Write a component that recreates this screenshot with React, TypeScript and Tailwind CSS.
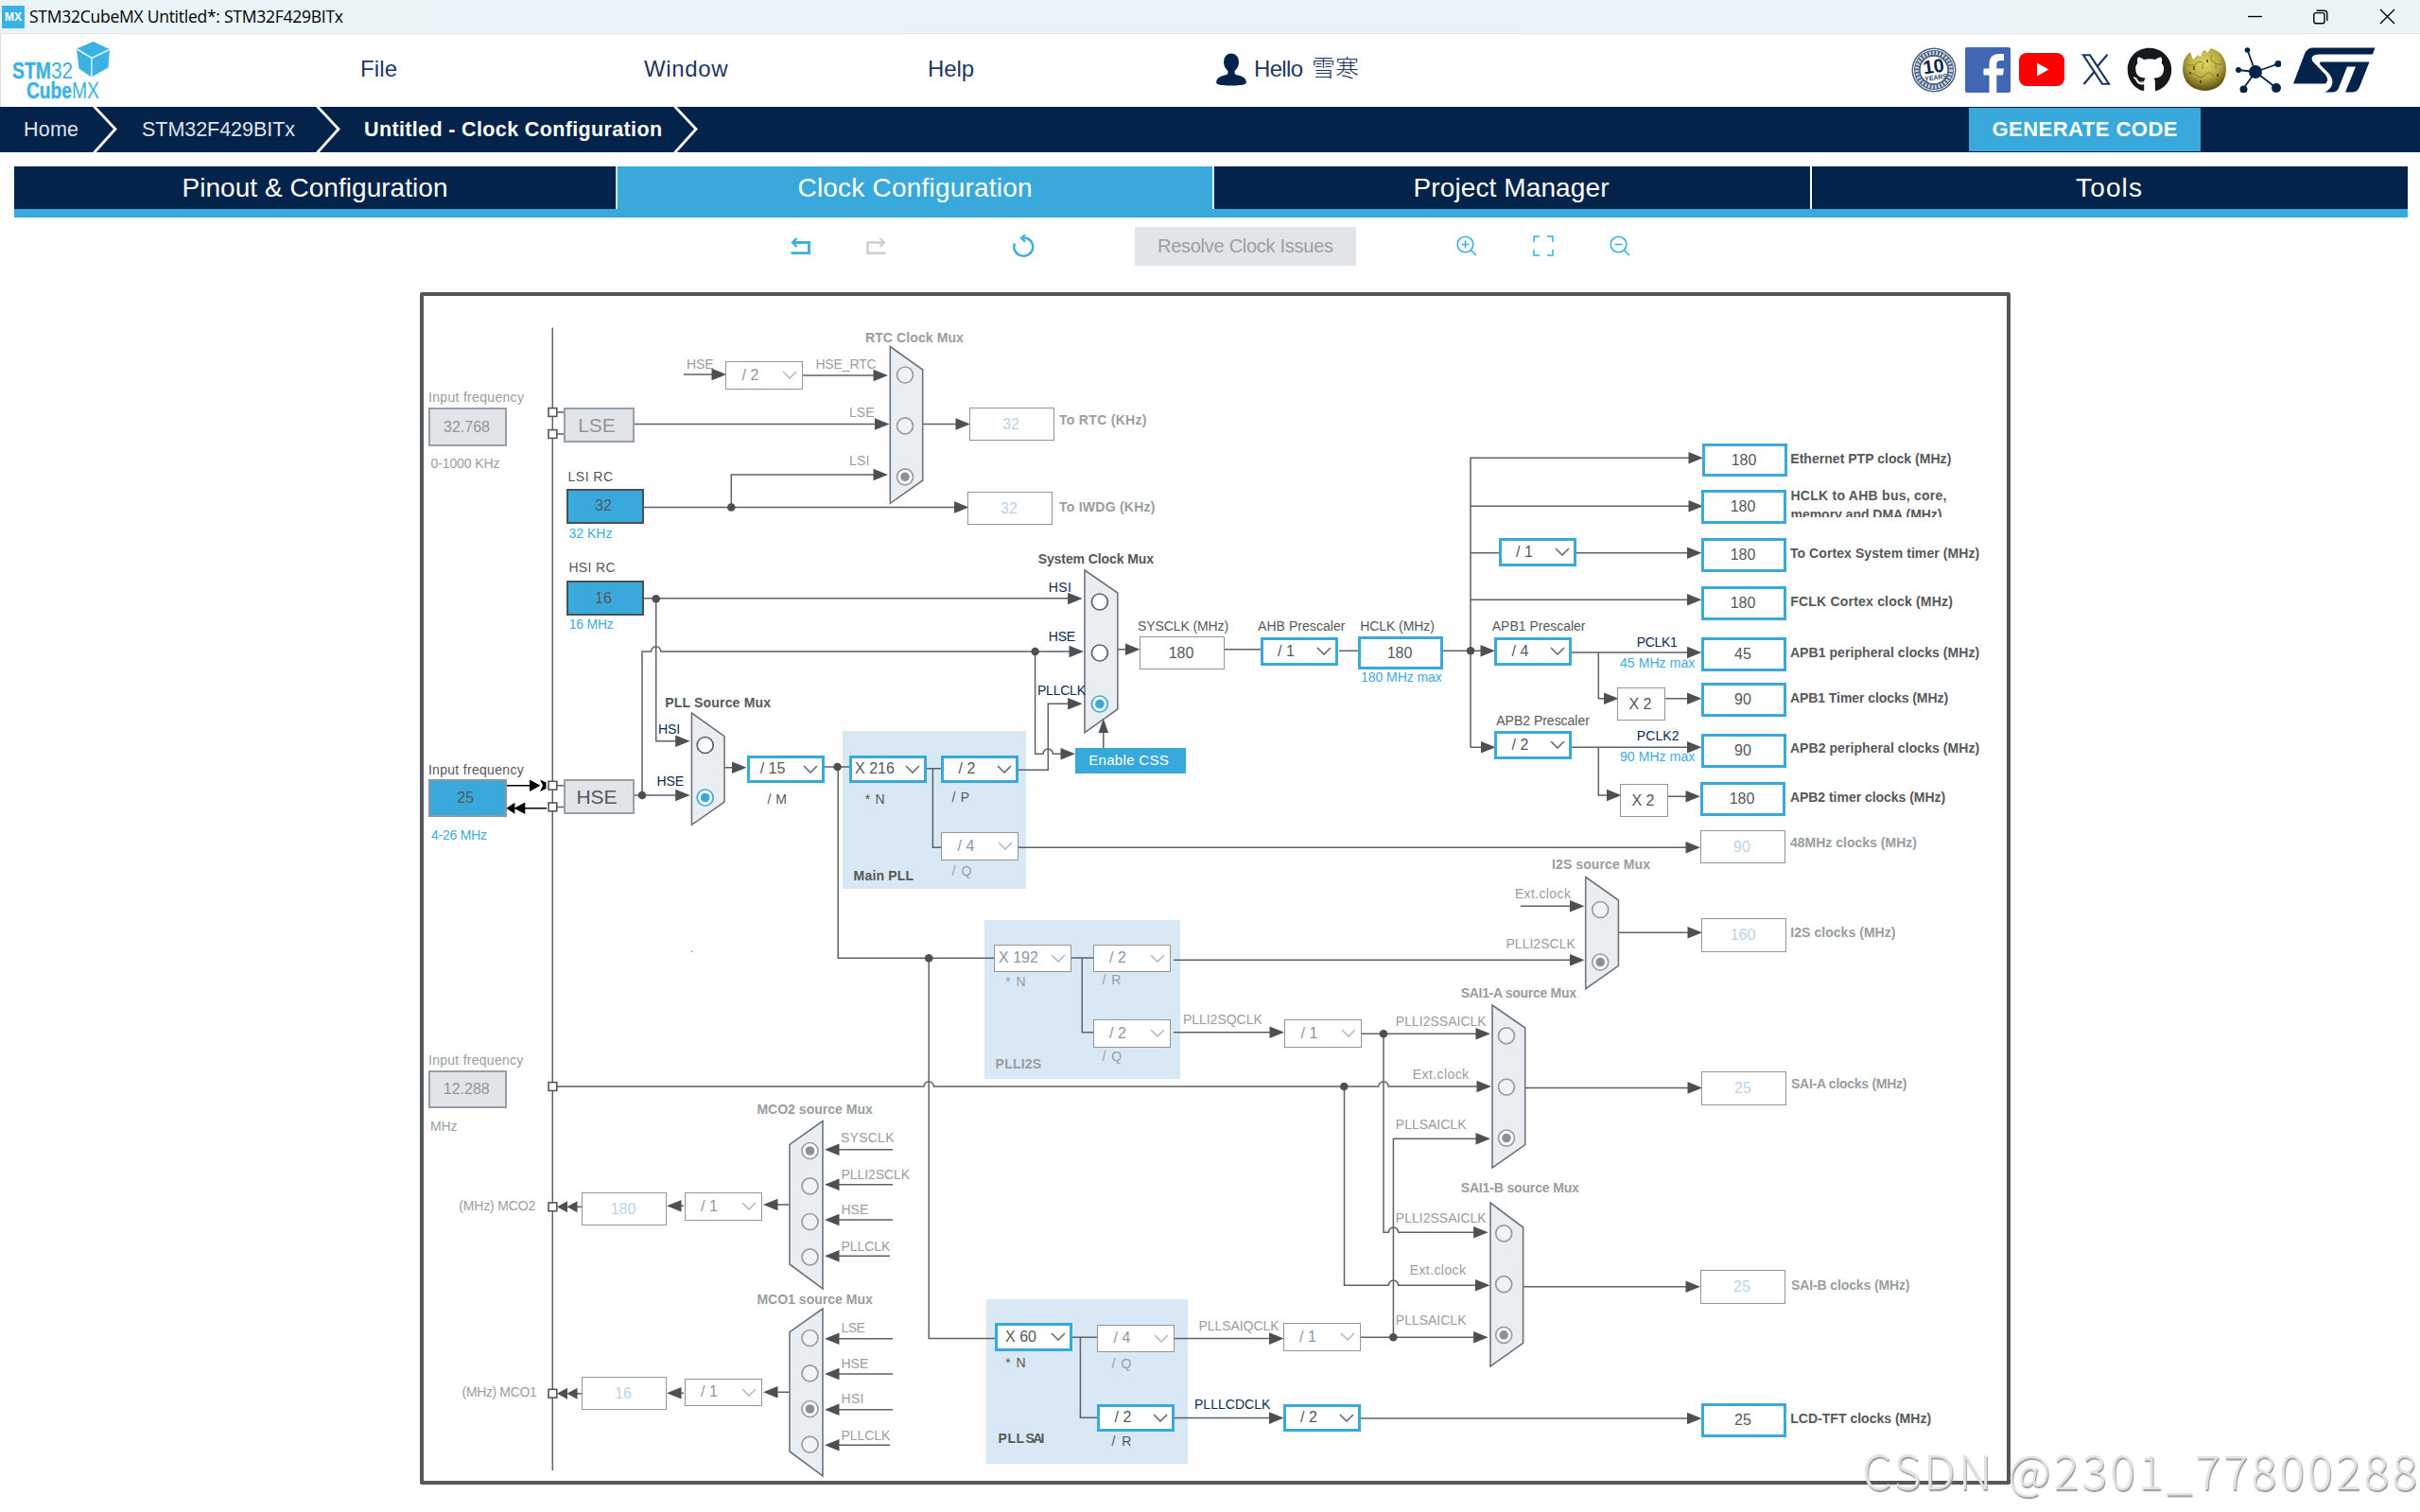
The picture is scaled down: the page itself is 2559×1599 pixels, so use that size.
import React, { useLayoutEffect, useRef } from "react";
import { FaGithub } from "react-icons/fa6";

/* Text run whose tracking is adjusted so that it spans a given width. */
function Fit({ t, w, className = "" }: { t: string; w?: number; className?: string }) {
  const ref = useRef<HTMLSpanElement>(null);
  useLayoutEffect(() => {
    const el = ref.current;
    if (!el || !w) return;
    el.style.letterSpacing = "0px";
    const natural = el.getBoundingClientRect().width;
    const gaps = Math.max(1, Array.from(t).length - 1);
    el.style.letterSpacing = `${(w - natural) / gaps}px`;
    el.style.marginRight = `${-(w - natural) / gaps}px`;
  }, [t, w]);
  return (
    <span ref={ref} className={`inline-block whitespace-pre ${className}`}>
      {t}
    </span>
  );
}

const OX = 444;
const OY = 309;

type Tone = "dark" | "gray" | "navy" | "blue";
const tones: Record<Tone, string> = {
  dark: "text-[#54585a]",
  gray: "text-[#999da1]",
  navy: "text-[#0b2a56]",
  blue: "text-[#3bace0]",
};

/* [text, left, right, baseline, tone, bold] */
type LabelRow = [string, number, number, number, Tone, boolean?];
const labels: LabelRow[] = [
  ["Input frequency", 454, 553.4, 425, "gray"],
  ["0-1000 KHz", 456.5, 528, 495.3, "gray"],
  ["LSI RC", 601.6, 647.5, 509, "dark"],
  ["32 KHz", 602.4, 647, 568.7, "blue"],
  ["HSI RC", 602.4, 650.2, 604.7, "dark"],
  ["16 MHz", 602.8, 648.3, 665, "blue"],
  ["HSE", 727, 754, 390.3, "gray"],
  ["HSE_RTC", 863.4, 926.2, 390.3, "gray"],
  ["RTC Clock Mux", 916, 1018.4, 362, "gray", true],
  ["LSE", 899, 924, 441.3, "gray"],
  ["LSI", 899, 919, 492.3, "gray"],
  ["To RTC (KHz)", 1121, 1212, 449, "gray", true],
  ["To IWDG (KHz)", 1121, 1221, 541, "gray", true],
  ["System Clock Mux", 1098.7, 1219.5, 595.7, "dark", true],
  ["HSI", 1109.8, 1132.3, 625.7, "navy"],
  ["HSE", 1109.8, 1136.6, 678.3, "navy"],
  ["PLLCLK", 1098, 1147.5, 735.3, "navy"],
  ["SYSCLK (MHz)", 1204, 1298.6, 667, "dark"],
  ["AHB Prescaler", 1331, 1422, 667, "dark"],
  ["HCLK (MHz)", 1439.3, 1516.4, 667, "dark"],
  ["180 MHz max", 1440, 1524.3, 720.7, "blue"],
  ["Ethernet PTP clock (MHz)", 1894.3, 2062.8, 490, "dark", true],
  ["To Cortex System timer (MHz)", 1893.9, 2092.7, 590.3, "dark", true],
  ["FCLK Cortex clock (MHz)", 1894.3, 2064.4, 641.3, "dark", true],
  ["APB1 Prescaler", 1578.8, 1676, 666.7, "dark"],
  ["PCLK1", 1731.8, 1773.4, 684.3, "navy"],
  ["45 MHz max", 1713.9, 1791.8, 705.7, "blue"],
  ["APB1 peripheral clocks (MHz)", 1893.9, 2092.7, 695.3, "dark", true],
  ["APB1 Timer clocks (MHz)", 1893.9, 2059.6, 743.3, "dark", true],
  ["APB2 Prescaler", 1583.3, 1680.4, 767, "dark"],
  ["PCLK2", 1731.8, 1775, 783.3, "navy"],
  ["90 MHz max", 1713.9, 1791.8, 804.7, "blue"],
  ["APB2 peripheral clocks (MHz)", 1893.9, 2092.7, 795.7, "dark", true],
  ["APB2 timer clocks (MHz)", 1893.9, 2056.7, 848.3, "dark", true],
  ["48MHz clocks (MHz)", 1893.9, 2026.5, 896.3, "gray", true],
  ["I2S source Mux", 1642, 1744.5, 918.7, "gray", true],
  ["PLL Source Mux", 704.3, 814.5, 747.7, "dark", true],
  ["HSI", 697, 718.7, 775.7, "navy"],
  ["HSE", 695.4, 722.7, 831.3, "navy"],
  ["Input frequency", 453.9, 553.2, 818.7, "dark"],
  ["4-26 MHz", 457, 514.6, 888.3, "blue"],
  ["/ M", 812.5, 831.3, 849.7, "dark"],
  ["* N", 915.7, 935.2, 849.7, "dark"],
  ["/ P", 1007.5, 1024.5, 848, "dark"],
  ["/ Q", 1007.5, 1026.8, 926, "gray"],
  ["Main PLL", 903.6, 965.6, 931, "dark", true],
  ["* N", 1064.3, 1084, 1043, "gray"],
  ["/ R", 1166.5, 1184.8, 1041.3, "gray"],
  ["/ Q", 1166.5, 1185.6, 1122.3, "gray"],
  ["PLLI2S", 1053.6, 1100.6, 1130, "gray", true],
  ["PLLI2SQCLK", 1251.9, 1334.3, 1083.3, "gray"],
  ["PLLI2SSAICLK", 1476.8, 1571.2, 1085, "gray"],
  ["Ext.clock", 1494.8, 1552.6, 1140.7, "gray"],
  ["PLLSAICLK", 1476.8, 1550, 1194.3, "gray"],
  ["PLLI2SSAICLK", 1476.8, 1571.2, 1293.3, "gray"],
  ["Ext.clock", 1491.7, 1549.5, 1347.7, "gray"],
  ["PLLSAICLK", 1476.8, 1550, 1401.3, "gray"],
  ["Ext.clock", 1602.9, 1660.4, 950, "gray"],
  ["PLLI2SCLK", 1593.5, 1665.3, 1002.5, "gray"],
  ["I2S clocks (MHz)", 1894.3, 2004, 990.7, "gray", true],
  ["SAI1-A source Mux", 1545.7, 1666.5, 1055.4, "gray", true],
  ["SAI-A clocks (MHz)", 1895, 2016, 1151.4, "gray", true],
  ["SAI1-B source Mux", 1545.7, 1669.4, 1260.7, "gray", true],
  ["SAI-B clocks (MHz)", 1895, 2019, 1364, "gray", true],
  ["Input frequency", 454, 552.8, 1126, "gray"],
  ["MHz", 456, 483, 1196, "gray"],
  ["MCO2 source Mux", 801.4, 922.3, 1178, "gray", true],
  ["SYSCLK", 890, 945, 1208, "gray"],
  ["PLLI2SCLK", 890.5, 961.7, 1247, "gray"],
  ["HSE", 890.5, 917.8, 1284.2, "gray"],
  ["PLLCLK", 890.5, 940.8, 1323.3, "gray"],
  ["(MHz) MCO2", 486.2, 565.8, 1280.3, "gray"],
  ["MCO1 source Mux", 801.4, 922.3, 1379, "gray", true],
  ["LSE", 890.5, 914.3, 1409.3, "gray"],
  ["HSE", 890.5, 917.8, 1446.7, "gray"],
  ["HSI", 890.5, 913, 1484, "gray"],
  ["PLLCLK", 890.5, 940.8, 1523, "gray"],
  ["(MHz) MCO1", 489.6, 567.2, 1477, "gray"],
  ["* N", 1064.3, 1084, 1446.3, "dark"],
  ["/ Q", 1176.5, 1195.8, 1446.7, "gray"],
  ["/ R", 1176.5, 1195.8, 1529, "dark"],
  ["PLL", 1056.6, 1082.5, 1526, "dark", true],
  ["SAI", 1085.5, 1104, 1526, "dark", true],
  ["PLLSAIQCLK", 1268.5, 1352, 1407.3, "gray"],
  ["PLLLCDCLK", 1264, 1342.8, 1490, "navy"],
  ["LCD-TFT clocks (MHz)", 1894.3, 2041.6, 1505, "dark", true],
];

function Label({ row }: { row: LabelRow }) {
  const [t, x1, x2, base, tone, bold] = row;
  return (
    <div className="absolute flex" style={{ left: x1 - 1 - OX, top: base - 15 - OY }}>
      <Fit t={t} w={x2 - x1 + 1.5} className={`text-[14px] leading-5 ${tones[tone]} ${bold ? "font-bold" : ""}`} />
    </div>
  );
}

/* Value boxes: [text, left, top, width, height, kind] */
type BoxKind = "active" | "plain" | "off" | "source" | "sourceGray" | "disabled" | "osc" | "oscOff";
const kinds: Record<BoxKind, string> = {
  active: "border-3 border-[#39a9dc] bg-white text-[#54585a] text-base pr-0.5",
  plain: "border-[1.5px] border-[#8f969c] bg-white text-[#54585a] text-base pr-0.5",
  off: "border-[1.5px] border-[#8f969c] bg-white text-[#b9d3ec] text-base pr-0.5",
  source: "border-2 border-[#4c5154] bg-[#39a9dc] text-[#54585a] text-base pr-1",
  sourceGray: "border-2 border-[#8f969c] bg-[#39a9dc] text-[#54585a] text-base pr-1",
  disabled: "border-2 border-[#999fa6] bg-[#e1e5e8] text-[#8f969c] text-base pr-0.5",
  osc: "border-2 border-[#999fa6] bg-[#e1e5e8] text-[#54585a] text-[21px] pr-[5px]",
  oscOff: "border-2 border-[#999fa6] bg-[#e1e5e8] text-[#8f969c] text-[21px] pr-[5px]",
};
const boxes: [string, number, number, number, number, BoxKind][] = [
  ["32.768", 453, 431, 83, 41, "disabled"],
  ["LSE", 596, 431, 75, 37, "oscOff"],
  ["32", 599, 516.5, 82, 37, "source"],
  ["16", 599, 614, 82, 37, "source"],
  ["25", 453, 824, 82.5, 40, "sourceGray"],
  ["HSE", 596, 824, 75, 37, "osc"],
  ["12.288", 453, 1131.5, 82.5, 40, "disabled"],
  ["32", 1025, 431, 90, 35, "off"],
  ["32", 1023, 520, 90, 35, "off"],
  ["180", 1205, 673, 90, 35, "plain"],
  ["180", 1436, 673, 90, 35, "active"],
  ["180", 1800, 469, 90, 35, "active"],
  ["180", 1799, 518, 90, 36, "active"],
  ["180", 1799, 569, 90, 36, "active"],
  ["180", 1799, 620, 90, 36, "active"],
  ["45", 1799, 674, 90, 36, "active"],
  ["90", 1799, 722, 90, 36, "active"],
  ["90", 1799, 776, 90, 36, "active"],
  ["180", 1798, 827, 90, 36, "active"],
  ["90", 1798, 878, 90, 35, "off"],
  ["X 2", 1710, 727, 51, 35, "plain"],
  ["X 2", 1713, 829, 51, 35, "plain"],
  ["160", 1799, 971, 90, 36, "off"],
  ["25", 1799, 1133, 90, 36, "off"],
  ["25", 1798, 1343, 90, 36, "off"],
  ["25", 1799, 1484, 90, 36, "active"],
  ["180", 615, 1261, 90, 35, "off"],
  ["16", 615, 1456, 90, 35, "off"],
];

/* Drop-downs: [text, left, top, state] */
const selects: [string, number, number, "on" | "off"][] = [
  ["/ 2", 767, 382, "off"],
  ["/ 1", 1332.5, 674, "on"],
  ["/ 1", 1584.5, 569, "on"],
  ["/ 4", 1580, 674, "on"],
  ["/ 2", 1580, 773, "on"],
  ["/ 15", 789.5, 798.5, "on"],
  ["X 216", 897.5, 798.5, "on"],
  ["/ 2", 995, 798.5, "on"],
  ["/ 4", 995, 880, "off"],
  ["X 192", 1050.5, 998.5, "off"],
  ["/ 2", 1155.5, 998.5, "off"],
  ["/ 2", 1155.5, 1078, "off"],
  ["/ 1", 1358, 1078, "off"],
  ["/ 1", 723.5, 1261, "off"],
  ["/ 1", 723.5, 1457.5, "off"],
  ["X 60", 1052, 1399, "on"],
  ["/ 4", 1160, 1400.5, "off"],
  ["/ 2", 1160, 1484.5, "on"],
  ["/ 1", 1356.5, 1399, "off"],
  ["/ 2", 1356.5, 1484.5, "on"],
];

function Select({ t, x, y, on }: { t: string; x: number; y: number; on: boolean }) {
  return (
    <div
      className={`absolute flex h-[29.5px] w-[82px] items-center justify-between bg-white text-base ${
        on ? "border-3 border-[#39a9dc] pr-1 text-[#54585a]" : "border-[1.5px] border-[#8f969c] pr-[5px] text-[#8f969c]"
      }`}
      style={{ left: x - OX, top: y - OY }}
    >
      <span className={`text-center leading-none whitespace-nowrap ${on ? "w-[49px]" : "w-[51px]"}`}>{t}</span>
      <svg className={`h-[9px] w-[16px] ${on ? "text-[#6b7074]" : "text-[#b8bcc0]"}`} viewBox="0 0 16 9" fill="none" stroke="currentColor" strokeWidth="1.7">
        <path d="M1 1l7 7 7-7" />
      </svg>
    </div>
  );
}

/* PLL background panels */
const panels: [number, number, number, number][] = [
  [891, 773, 194, 166.5],
  [1040.5, 973, 207, 167.5],
  [1042.5, 1373.5, 213, 174.5],
];

const wires = [
  "M584.3 346.5V1555",
  "M589 436H596M589 459H596M589 830.7H596M589 853.5H596",
  "M723 396H758M849 397H928",
  "M671 448.5H930M976 448.5H1016",
  "M681 536.5H1014M773.3 536.5V502H928",
  "M681 632.8H1134M693.7 633V783.7H718",
  "M671 841H718M679 841V689H688.5a5.2 5.2 0 0 1 10.4 0H1135",
  "M1094.6 689V797.3H1103a5.2 5.2 0 0 1 10.4 0H1126",
  "M1077 814.3H1108.3V744.3H1134",
  "M1166.8 791V772",
  "M1182 686.7H1196M1295 686.7H1333M1416 688.3H1436M1526 688.3H1572",
  "M1555 790.3V484.3H1790M1555 535.3H1790M1555 584.7H1585M1666 584.7H1790M1555 634.3H1790",
  "M1662 690H1790M1690.3 690V738.7H1704M1761 738.7H1788",
  "M1555 790.3H1572M1662 790.3H1790M1690.3 790.3V841H1706M1764 842.3H1788",
  "M1077 896.3H1788",
  "M766 811.7H778M871 811H898M886.2 811V1013.2H1051M979 812.7H995M986.4 812.7V896.3H995",
  "M982.2 1013.2V1415.5H1053",
  "M1133 1013H1156M1144.3 1013V1091.7H1156M1241 1015.3H1664M1241 1091.7H1347",
  "M1440 1093.2H1565M1463 1093.2V1303.3H1468.3a5.2 5.2 0 0 1 10.4 0H1563",
  "M589 1149H977a5.2 5.2 0 0 1 10.4 0H1457.8a5.2 5.2 0 0 1 10.4 0H1566",
  "M1421.5 1149V1359.3H1468.3a5.2 5.2 0 0 1 10.4 0H1564",
  "M1565 1204.3H1473.4V1414.3M1438 1414.3H1563",
  "M1608 958.2H1664M1711 986.2H1790M1612 1150.4H1790M1610 1360.7H1787",
  "M1134 1414.3H1160M1142.4 1414.3V1499.3H1160M1242 1415.6H1349M1242 1499.6H1349M1438 1500H1790",
  "M884 1215.7H944M884 1252.7H944M884 1290H944M884 1328.3H941",
  "M884 1415.7H944M884 1453H944M884 1490.7H944M884 1528.3H941",
  "M835 1274H818M723 1275.3H716M615 1276.3H606M835 1472.3H818M723 1473.3H716M615 1473.7H606",
].join("");

/* Arrow heads pointing right (tip x, y) and left */
const rightHeads: [number, number][] = [
  [768, 396], [939, 397], [940.5, 448.5], [939, 502], [1026, 448.5], [1024.5, 536.5],
  [1144.6, 633], [1146, 689], [1144.6, 744.3], [1137, 797.3], [1205.5, 686.7], [1581, 688.3], [1581.5, 790.3],
  [1801, 484.3], [1801, 535.3], [1799.5, 584.7], [1799.5, 634.3], [1799.5, 690], [1799.5, 738.7], [1799.5, 790.3],
  [1711.5, 738.7], [1714.5, 841], [1798, 842.3], [1798, 896.3],
  [729.7, 783.7], [729.7, 841], [789.5, 811.7], [1675.5, 958.2], [1675.5, 1015.3], [1800, 986.2],
  [1358, 1091.7], [1576, 1093.2], [1577, 1149], [1576, 1204.3], [1573.6, 1303.3], [1575.5, 1359.3], [1573.6, 1414.3],
  [1800, 1150.4], [1798, 1360.7], [1357.5, 1415.6], [1357.5, 1499.6], [1799.5, 1500],
];
const leftHeads: [number, number][] = [
  [872, 1215.7], [872, 1252.7], [872, 1290], [872, 1328.3],
  [872, 1415.7], [872, 1453], [872, 1490.7], [872, 1528.3],
  [807, 1274], [807, 1472.3], [705, 1275.3], [705, 1473.3],
];
const shortLeftHeads: [number, number][] = [[589, 1276.3], [599.5, 1276.3], [589, 1473.7], [599.5, 1473.7]];
const dots: [number, number][] = [
  [773.3, 536.5], [693.7, 633.3], [1094.6, 689], [1555, 688.3], [679, 841], [885.6, 811], [982.2, 1013.2],
  [1463, 1093.2], [1421.3, 1149], [1473.3, 1414.3],
];
const pins = [436, 459, 830.7, 853.4, 1149, 1276.3, 1473.7];

/* Multiplexers: outline plus radio circles [y, selected] */
const muxes: { d: string; cx: number; on: boolean; r: [number, boolean][] }[] = [
  { d: "M941.3 366.5L975.7 391V508L941.3 532.3Z", cx: 957, on: false, r: [[396.5, false], [450.3, false], [504.3, true]] },
  { d: "M1147 603L1181.8 627V750L1147 774.7Z", cx: 1162.9, on: true, r: [[636.5, false], [690.5, false], [744.5, true]] },
  { d: "M731.4 754L766 778.7V848L731.4 872.3Z", cx: 745.7, on: true, r: [[788, false], [843.5, true]] },
  { d: "M1676.7 927.5L1711.4 952V1021.4L1676.7 1045.7Z", cx: 1692.2, on: false, r: [[962, false], [1017.5, true]] },
  { d: "M1578 1063L1612.7 1087V1210.7L1578 1235Z", cx: 1593, on: false, r: [[1095.4, false], [1149.6, false], [1203.6, true]] },
  { d: "M1576 1272L1610.6 1298V1420.4L1576 1445Z", cx: 1590.2, on: false, r: [[1304.3, false], [1358.2, false], [1411.8, true]] },
  { d: "M870 1185.5L835 1210.3V1337L870 1363Z", cx: 856.5, on: false, r: [[1217, true], [1254.3, false], [1292, false], [1329.3, false]] },
  { d: "M870 1384L835 1408.7V1535L870 1561Z", cx: 856.5, on: false, r: [[1415, false], [1452.3, false], [1490, true], [1527.7, false]] },
];

function Radio({ cx, cy, on, sel }: { cx: number; cy: number; on: boolean; sel: boolean }) {
  const stroke = on ? (sel ? "#39a9dc" : "#5c6164") : "#989da2";
  return (
    <g>
      <circle cx={cx} cy={cy} r="8.5" fill={on || sel ? "#fff" : "#f1f2f4"} stroke={stroke} strokeWidth="1.7" />
      {sel && <circle cx={cx} cy={cy} r="4.8" fill={on ? "#39a9dc" : "#8c9196"} />}
    </g>
  );
}

function ClockDiagram() {
  return (
    <section className="relative ml-[444px] h-[1261px] w-[1682px] shrink-0">
      {panels.map(([x, y, w, h]) => (
        <div key={y} className="absolute bg-[#d9e8f5]" style={{ left: x - OX, top: y - OY, width: w, height: h }} />
      ))}
      <svg className="absolute inset-0 h-full w-full" viewBox="444 309 1682 1261">
        <path d={wires} fill="none" stroke="#5e6264" strokeWidth="1.5" />
        <g fill="#4c5052">
          {rightHeads.map(([x, y], i) => (
            <path key={i} d={`M${x} ${y}l-15.5 -6.3v12.6z`} />
          ))}
          {leftHeads.map(([x, y], i) => (
            <path key={i} d={`M${x} ${y}l15.5 -6.3v12.6z`} />
          ))}
          {shortLeftHeads.map(([x, y], i) => (
            <path key={i} d={`M${x} ${y}l11 -6v12z`} />
          ))}
          {dots.map(([x, y], i) => (
            <circle key={i} cx={x} cy={y} r="4.3" />
          ))}
        </g>
        <path d="M535 830.7H565M555 854.7H578" stroke="#000" strokeWidth="1.5" />
        <path d="M560 824.5l11.5 6.2-11.5 6.2zM571 824.5l6.5 3v6.4l-6.5 3 3-6.2zM535.4 854.7l9-6v12zM543.5 854.7l11.8-6.2v12.4z" fill="#000" />
        <g fill="#fff" stroke="#54585a" strokeWidth="1.6">
          {pins.map((y) => (
            <rect key={y} x="580" y={y - 4.4} width="8.8" height="8.8" />
          ))}
        </g>
        {muxes.map((m) => (
          <g key={m.d}>
            <path d={m.d} fill="#e9eef2" stroke="#6f757a" strokeWidth="1.6" />
            {m.r.map(([cy, sel]) => (
              <Radio key={cy} cx={m.cx} cy={cy} on={m.on} sel={sel} />
            ))}
          </g>
        ))}
        <path d="M1166.8 760l-5.3 15h10.6z" fill="#4c5052" />
        <rect x="731" y="1005.5" width="1" height="1.5" fill="#777" />
      </svg>

      {boxes.map(([t, x, y, w, h, kind], i) => (
        <div
          key={i}
          className={`absolute flex items-center justify-center leading-none ${kinds[kind]}`}
          style={{ left: x - OX, top: y - OY, width: w, height: h }}
        >
          {t}
        </div>
      ))}
      {selects.map(([t, x, y, s], i) => (
        <Select key={i} t={t} x={x} y={y} on={s === "on"} />
      ))}
      {labels.map((row, i) => (
        <Label key={i} row={row} />
      ))}
      <div className="absolute top-[205px] left-[1449.5px] flex h-[33px] w-[180px] flex-col overflow-hidden text-[14px] leading-5 font-bold text-[#54585a]">
        <Fit t="HCLK to AHB bus, core," w={165} className="self-start" />
        <Fit t="memory and DMA (MHz)" w={160} className="self-start" />
      </div>
      <button className="absolute top-[482px] left-[693px] flex h-[27px] w-[117px] items-center justify-center bg-[#39a9dc] pr-1 text-[15px] text-white">
        <Fit t="Enable CSS" w={84.5} />
      </button>
      <div className="absolute inset-0 rounded-[2px] border-4 border-[#54585a]" />
    </section>
  );
}

function TitleBar() {
  return (
    <div className="flex h-9 shrink-0 items-center border-b border-[#dfe3e6] bg-linear-to-r from-[#ebf4f6] via-[#ebf3fa] to-[#ebf4f6] text-black">
      <div className="ml-0.5 flex h-6 w-6 items-center justify-center bg-[#3cb1e3] text-[12px] font-bold text-white">
        <Fit t="MX" w={18} />
      </div>
      <Fit t="STM32CubeMX Untitled*: STM32F429BITx" w={332} className="ml-[5px] font-['Open_Sans',sans-serif] text-[17.5px] leading-none" />
      <svg className="ml-auto h-4 w-4" viewBox="0 0 16 16">
        <path d="M0 7.5H15" stroke="#000" strokeWidth="1.3" />
      </svg>
      <svg className="ml-[53px] h-4 w-4" viewBox="0 0 16 16" fill="none" stroke="#000" strokeWidth="1.4">
        <rect x="0.8" y="3.6" width="11.2" height="11.2" rx="2" />
        <path d="M3.5 1.2H11.5Q14.8 1.2 14.8 4.5V12" />
      </svg>
      <svg className="mr-[26px] ml-[54px] h-[17px] w-[17px]" viewBox="0 0 17 17" stroke="#000" strokeWidth="1.4">
        <path d="M1 1L16 16M16 1L1 16" />
      </svg>
    </div>
  );
}

function Logo() {
  return (
    <div className="h-full w-[380px] shrink-0">
      <svg className="h-[77px] w-[120px]" viewBox="1 36 120 77" fill="#3bb2e4">
        <path d="M81 51.5L98.5 44L116 52L114.5 71.5L96.5 81.5L83.5 72.5Z" />
        <path d="M81.5 52L97 61.5L115.5 52.5M97 61.5L96.7 81" stroke="#e9f7fd" strokeWidth="1.5" fill="none" />
        <g fontSize="23.5">
          <text x="13" y="82.5" fontWeight="bold" textLength="41" lengthAdjust="spacingAndGlyphs" stroke="#3bb2e4" strokeWidth="0.4">STM</text>
          <text x="54" y="82.5" textLength="23" lengthAdjust="spacingAndGlyphs">32</text>
          <text x="28" y="103.5" fontWeight="bold" textLength="48" lengthAdjust="spacingAndGlyphs" stroke="#3bb2e4" strokeWidth="0.4">Cube</text>
          <text x="76" y="103.5" textLength="29" lengthAdjust="spacingAndGlyphs">MX</text>
        </g>
      </svg>
    </div>
  );
}

function SocialIcons() {
  return (
    <div className="ml-auto flex h-12 shrink-0 items-center pb-0.5">
      <svg className="h-12 w-12" viewBox="0 0 48 48">
        <circle cx="24" cy="24" r="23.5" fill="#4a6283" />
        <circle cx="24" cy="24" r="21.5" fill="none" stroke="#fff" strokeWidth="1" />
        <circle cx="24" cy="24" r="18" fill="none" stroke="#c6d0dc" strokeWidth="4.2" strokeDasharray="2 1.6" />
        <circle cx="24" cy="24" r="15" fill="#fff" stroke="#4a6283" strokeWidth="1.4" />
        <text x="24" y="27" textAnchor="middle" fontSize="20" fontWeight="bold" fill="#03234b" transform="rotate(-8 24 24)">10</text>
        <text x="25" y="34.5" textAnchor="middle" fontSize="7" fontWeight="bold" fill="#2c4668" transform="rotate(-8 24 24)">YEARS</text>
      </svg>
      <svg className="ml-[9px] h-12 w-12" viewBox="0 0 48 48">
        <rect width="48" height="48" rx="2" fill="#4267b2" />
        <path d="M25.5 48V29.5H19.5V22.5H25.5V17.5Q25.5 7 35.5 7H41V14H37.5Q33.3 14 33.3 18V22.5H41L40 29.5H33.3V48Z" fill="#fff" />
      </svg>
      <svg className="ml-[9px] h-[35px] w-12" viewBox="0 0 48 35">
        <rect width="48" height="35" rx="8" fill="#f00" />
        <path d="M19 10.5L31.5 17.5L19 24.5Z" fill="#fff" />
      </svg>
      <svg className="ml-[18px] h-[33px] w-[31px]" viewBox="0 0 31 33" fill="none" stroke="#17375e" strokeWidth="2.1">
        <path d="M2 1.3H9L29 31.7H22Z" />
        <path d="M27.5 0.8L17 13M2.5 32L13.5 19" />
      </svg>
      <FaGithub className="ml-[17px] h-12 w-12 text-[#16191c]" />
      <svg className="ml-[10px] h-[48px] w-12" viewBox="0 0 48 48">
        <defs>
          <radialGradient id="globe" cx="0.5" cy="0.35" r="0.65">
            <stop offset="0" stopColor="#e2d868" />
            <stop offset="0.55" stopColor="#b9ab42" />
            <stop offset="1" stopColor="#54490f" />
          </radialGradient>
        </defs>
        <path d="M9 5L12 13L17 8L20 10L22 4L25 3L27 6L31 1Q47 6 47 23.5Q46 45 24 46Q2 44 1 23Q1 11 9 5Z" fill="url(#globe)" />
        <path d="M6 18q6 3 10-1t8 1M32 8q-3 5 2 8t9 2M5 29q7-3 11 1t9-1 9 2 9-3M22 18v5M36 18v5M15 32q-1 3 1 6M31 33q2 3 0 6" fill="none" stroke="#857828" strokeWidth="0.9" />
        <path d="M13 20v4M27 13v3M20 35v3M38 28v3M9 26v2" stroke="#3f370c" strokeWidth="1.4" />
      </svg>
      <svg className="ml-[9px] h-12 w-12" viewBox="0 0 48 48" fill="#03234b">
        <path d="M21 26L12.5 3M21 26L3 24M21 26L45 17.5M21 26L43 43M21 26L8 44" stroke="#03234b" strokeWidth="1.8" />
        <circle cx="21" cy="26" r="7" />
        <circle cx="12.5" cy="3" r="2.8" />
        <circle cx="3" cy="24" r="3" />
        <circle cx="45" cy="17.5" r="3.6" />
        <circle cx="43" cy="43" r="5" />
        <circle cx="8.5" cy="44.5" r="4" />
      </svg>
      <svg className="mr-[47px] ml-[13px] h-12 w-[87px]" viewBox="0 0 87 48" fill="#03234b">
        <path d="M20 0.5H86.5L83.8 7.5H27Q17 8 20.5 15L34.5 29.5Q38 35 34 38.5H0L12 7Q14.5 1 20 0.5Z" />
        <path d="M29 15.5H80.5L70 42Q68 47 62.5 47.5H55L66 20.5H57L48 43Q46.5 47 42 47.5H33Q41 44 41.5 37Q41 31 37 27L29 19Q27 16.5 29 15.5Z" />
      </svg>
    </div>
  );
}

function Crumb({ t, w, lead, gap, bold }: { t: string; w: number; lead: string; gap: string; bold?: boolean }) {
  return (
    <>
      <Fit t={t} w={w} className={`${lead} ${bold ? "font-bold text-white" : "text-[#dfe4ea]"}`} />
      <svg className={`h-12 w-[26px] shrink-0 ${gap}`} viewBox="0 0 26 48" fill="none">
        <path d="M1.5 -0.5L24 23.5L1.5 48.5" stroke="#fff" strokeWidth="2.8" />
      </svg>
    </>
  );
}

export default function App() {
  return (
    <div className="flex h-[1599px] w-full flex-col overflow-hidden bg-white font-['Liberation_Sans',Arial,sans-serif]">
      <TitleBar />
      <nav className="flex h-[77px] shrink-0 items-center border-l border-[#dcdfe2] text-2xl text-[#1d3763]">
        <Logo />
        <div className="w-[300px] shrink-0 pb-[3px]"><Fit t="File" w={39} /></div>
        <div className="w-[300px] shrink-0 pb-[3px]"><Fit t="Window" w={88.5} /></div>
        <div className="w-[305px] shrink-0 pb-[3px]"><Fit t="Help" w={49} /></div>
        <div className="flex items-center pb-0.5">
          <svg className="h-[35px] w-8" viewBox="0 0 32 35" fill="#03234b">
            <path d="M16 0.5Q24 1 24 10Q23.5 16 19.5 19Q19 22 21 23Q32 25 32 31Q32 34.5 16 34.5T0 31Q0 25 11 23Q13 22 12.5 19Q8.5 16 8 10Q8 1 16 0.5Z" />
          </svg>
          <div className="ml-[8px] flex pb-px">
            <Fit t="Hello" w={52} />
            <Fit t="雪寒" className="ml-[9px] -mt-px font-['Noto_Sans_CJK_SC',sans-serif] text-[25px] leading-[28px] font-light" />
          </div>
        </div>
        <SocialIcons />
      </nav>

      <div className="flex h-12 shrink-0 items-center bg-[#03234b] text-[21.5px]">
        <Crumb t="Home" w={58} lead="ml-[25px]" gap="ml-[15px]" />
        <Crumb t="STM32F429BITx" w={162} lead="ml-[26px]" gap="ml-[22px]" />
        <Crumb t="Untitled - Clock Configuration" w={315} lead="ml-[25px]" gap="ml-[12px]" bold />
        <button className="mr-[232px] ml-auto flex h-[46px] w-[245px] items-center justify-center bg-[#39a9dc] pb-px text-[22px] font-bold text-white">
          <Fit t="GENERATE CODE" w={196} />
        </button>
      </div>

      <div className="mx-[15px] mt-[15px] mr-[13px] flex h-[54px] shrink-0 border-b-[9px] border-[#39a9dc] text-[28px] text-white">
        <div className="flex w-[638px] items-center justify-center border-r-2 border-[#c8dcea] bg-[#03234b] pt-px"><Fit t="Pinout & Configuration" w={281} /></div>
        <div className="flex w-[631px] items-center justify-center border-r-2 border-white bg-[#39a9dc] pt-px"><Fit t="Clock Configuration" w={248} /></div>
        <div className="flex w-[632px] items-center justify-center border-r-2 border-white bg-[#03234b] pt-px pr-0.5"><Fit t="Project Manager" w={207} /></div>
        <div className="flex flex-1 items-center justify-center bg-[#03234b] pt-px pr-0.5"><Fit t="Tools" w={70} /></div>
      </div>

      <div className="flex h-[61px] shrink-0 items-center pb-px pl-[836px] text-[#39b0e0]">
        <svg className="h-[19px] w-[21px]" viewBox="0 0 21 19" fill="none" stroke="currentColor" strokeWidth="2.8">
          <path d="M2 5.5H19.5V16.7H0.5" />
          <path d="M6.5 1L2 5.5L6.5 10" strokeWidth="2.4" />
        </svg>
        <svg className="ml-[59px] h-[19px] w-[21px] text-[#ccd0d3]" viewBox="0 0 21 19" fill="none" stroke="currentColor" strokeWidth="2.6">
          <path d="M19 5.5H1.5V16.7H20.5" />
          <path d="M14.5 1L19 5.5L14.5 10" strokeWidth="2.2" />
        </svg>
        <svg className="ml-[134px] h-6 w-6" viewBox="0 0 24 24" fill="none" stroke="currentColor" strokeWidth="2.5">
          <path d="M2 9.5A10 9.6 0 1 0 11 3.5" />
          <path d="M13 0.2L9 3.8L13 7.6" strokeWidth="2.2" />
        </svg>
        <button className="ml-[105px] flex h-[41px] w-[234px] items-center justify-center bg-[#e1e5e8] text-[20px] text-[#9aa0a5]">
          <Fit t="Resolve Clock Issues" w={186} />
        </button>
        <svg className="ml-[106px] h-[22px] w-[22px]" viewBox="0 0 22 22" fill="none" stroke="currentColor" strokeWidth="1.6">
          <circle cx="9.5" cy="9.5" r="8.3" />
          <path d="M15.5 15.5L21 21M5.5 9.5h8M9.5 5.5v8" />
        </svg>
        <svg className="ml-[59px] h-[22px] w-[22px]" viewBox="0 0 22 22" fill="none" stroke="currentColor" strokeWidth="1.5">
          <path d="M1 7V1H7M15 1H21V7M21 15V21H15M7 21H1V15" />
        </svg>
        <svg className="ml-[59px] h-[22px] w-[22px]" viewBox="0 0 22 22" fill="none" stroke="currentColor" strokeWidth="1.6">
          <circle cx="9.5" cy="9.5" r="8.3" />
          <path d="M15.5 15.5L21 21M5.5 9.5h8" />
        </svg>
      </div>

      <main className="relative flex flex-1 pt-[18px]">
        <ClockDiagram />
        <div className="absolute top-[1226px] left-[1969px] font-['Noto_Sans_CJK_SC',sans-serif] text-[50px] leading-[72px] font-light text-[#e3e3e3] [text-shadow:1px_1.5px_1px_#9a9a9a]">
          <Fit t="CSDN @2301_77800288" w={587} />
        </div>
      </main>
    </div>
  );
}
